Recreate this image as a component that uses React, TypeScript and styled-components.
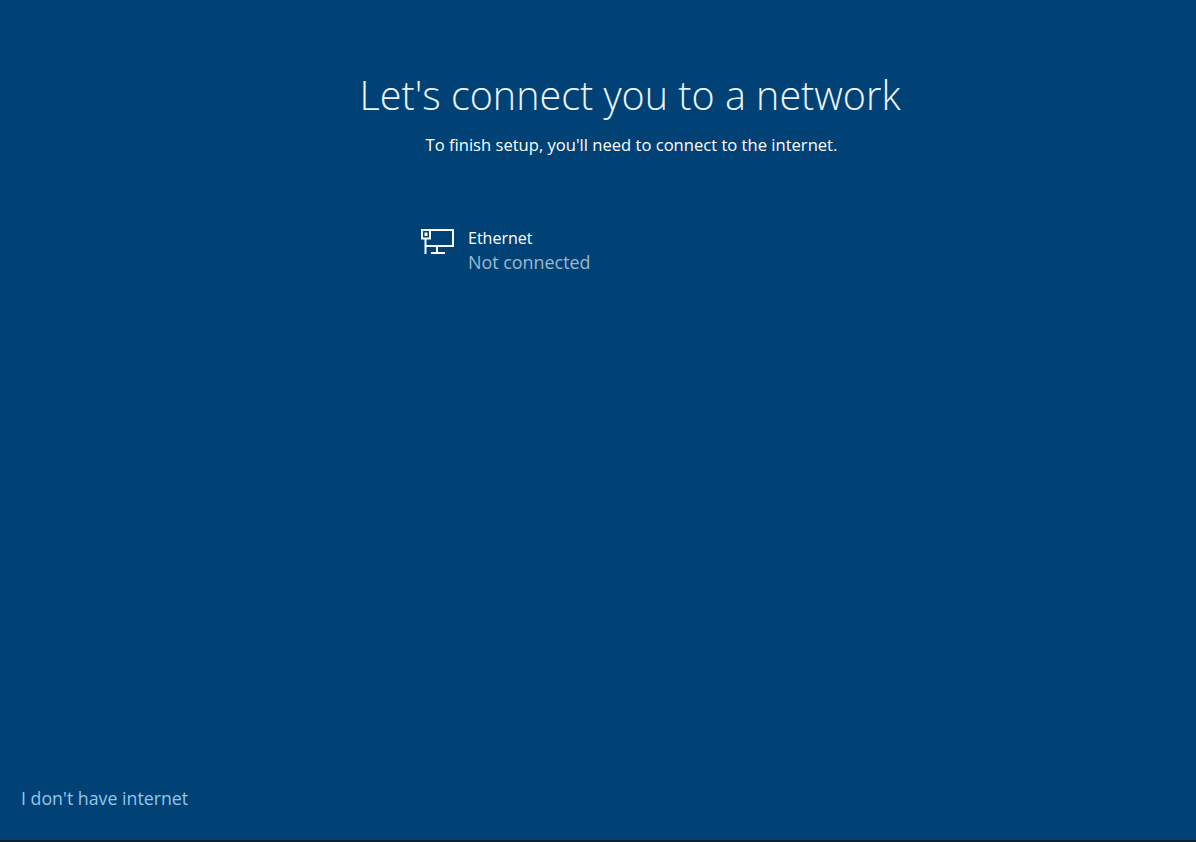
import React from "react";
import styled, { createGlobalStyle } from "styled-components";

const Global = createGlobalStyle`
  html, body { margin: 0; padding: 0; height: 100%; background: #004275; overflow: hidden; }
  #root { height: 100%; }
`;

const Page = styled.div`
  height: 842px;
  box-sizing: border-box;
  background: #004275;
  border-bottom: 2px solid #10202c;
  display: flex;
  flex-direction: column;
  font-family: "Open Sans", "Noto Sans", "Liberation Sans", sans-serif;
  color: #fff;
`;

const Main = styled.main`
  flex: 1;
  display: flex;
  flex-direction: column;
  align-items: center;
  padding: 66px 0 0 66px;
`;

const Title = styled.h1`
  margin: 0 2px 0 0;
  font-size: 39.5px;
  line-height: 58px;
  font-weight: 300;
  color: #eef4f8;
  white-space: nowrap;
`;

const Subtitle = styled.p`
  margin: 10px 0 0 1px;
  font-size: 16.58px;
  line-height: 22px;
  font-weight: 400;
  color: #fff;
  white-space: nowrap;
`;

const NetworkRow = styled.div`
  align-self: flex-start;
  margin: 71px 0 0 354px;
  display: flex;
  align-items: flex-start;
  gap: 14px;
`;

const NetworkIcon = styled.svg`
  width: 34px;
  height: 28px;
  margin-top: 1px;
  flex: none;
`;

const NetworkText = styled.div`
  display: flex;
  flex-direction: column;
`;

const NetworkName = styled.span`
  font-size: 16px;
  line-height: 22px;
  color: #fff;
`;

const NetworkStatus = styled.span`
  font-size: 17.9px;
  line-height: 26px;
  color: #9db8cc;
`;

const Footer = styled.footer`
  padding: 0 0 30px 21px;
`;

const SkipLink = styled.a`
  font-size: 17.75px;
  line-height: 24px;
  color: #95c6e8;
  text-decoration: none;
  cursor: pointer;
`;

export default function App() {
  return (
    <Page>
      <Global />
      <Main>
        <Title>Let's connect you to a network</Title>
        <Subtitle>To finish setup, you'll need to connect to the internet.</Subtitle>
        <NetworkRow>
          <NetworkIcon viewBox="0 0 34 28" fill="none" stroke="#fff" strokeWidth="2">
            <path d="M10 2H33V18H6" />
            <path d="M2 2H10V10.5H2Z" />
            <path d="M5.5 10.5V26" />
            <path d="M17 18V25" />
            <path d="M11 25H25" />
            <path d="M4.5 4.5H7.5V8H4.5Z" fill="#fff" stroke="none" />
          </NetworkIcon>
          <NetworkText>
            <NetworkName>Ethernet</NetworkName>
            <NetworkStatus>Not connected</NetworkStatus>
          </NetworkText>
        </NetworkRow>
      </Main>
      <Footer>
        <SkipLink>I don't have internet</SkipLink>
      </Footer>
    </Page>
  );
}
